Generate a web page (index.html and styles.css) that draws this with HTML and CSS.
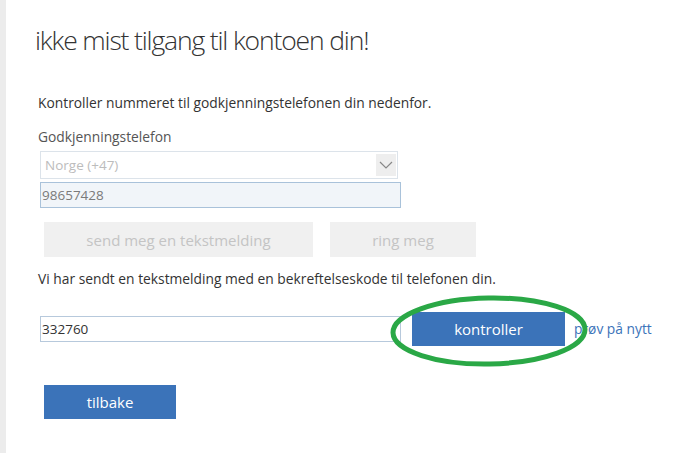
FILE: index.html
```html
<!DOCTYPE html>
<html lang="no">
<head>
<meta charset="utf-8">
<title>Bekreft telefon</title>
<link rel="stylesheet" href="styles.css">
</head>
<body>
<div class="page">
  <h1 class="title">ikke mist tilgang til kontoen din!</h1>
  <p class="intro">Kontroller nummeret til godkjenningstelefonen din nedenfor.</p>
  <div class="label">Godkjenningstelefon</div>
  <div class="select">
    <span class="select-text">Norge (+47)</span>
    <span class="select-arrow">
      <svg width="14" height="8" viewBox="0 0 14 8"><path d="M1 1 L7 7 L13 1" fill="none" stroke="#888" stroke-width="1.2"/></svg>
    </span>
  </div>
  <div class="phone">98657428</div>
  <div class="send-row">
    <div class="btn-disabled btn-sms">send meg en tekstmelding</div>
    <div class="btn-disabled btn-call">ring meg</div>
  </div>
  <p class="info">Vi har sendt en tekstmelding med en bekreftelseskode til telefonen din.</p>
  <div class="code-row">
    <div class="code">332760</div>
    <div class="verify-wrap">
      <div class="btn-primary btn-verify">kontroller</div>
      <svg class="ring" width="200" height="76" viewBox="0 0 200 76"><ellipse cx="100" cy="38" rx="96" ry="33" transform="rotate(-1 100 38)" fill="none" stroke="#2aa846" stroke-width="5"/></svg>
    </div>
    <a class="retry" href="#">prøv på nytt</a>
  </div>
  <div class="btn-primary btn-back">tilbake</div>
</div>
</body>
</html>
```
FILE: styles.css
```css
html, body {
  margin: 0;
  padding: 0;
  background: #fff;
}
body {
  font-family: "Open Sans", "Liberation Sans", sans-serif;
  color: #333;
}
.page {
  border-left: 6px solid #ececec;
  min-height: 453px;
  box-sizing: border-box;
  padding: 0 0 0 32px;
}
.title {
  margin: 0 0 0 -3px;
  padding-top: 22px;
  font-family: "Open Sans", sans-serif;
  font-weight: 300;
  font-size: 26.5px;
  letter-spacing: -1.15px;
  line-height: 36px;
  color: #333;
}
.intro {
  margin: 36px 0 0 0;
  font-size: 13.8px;
  line-height: 18px;
}
.label {
  margin-top: 16px;
  font-size: 13.8px;
  line-height: 18px;
  color: #555;
}
.select {
  margin: 5px 0 0 2px;
  width: 358px;
  height: 28px;
  box-sizing: border-box;
  border: 1px solid #dce3ea;
  display: flex;
  align-items: center;
  justify-content: space-between;
  padding: 0 1px 0 4px;
}
.select-text {
  font-size: 13.5px;
  color: #bcbcbc;
}
.select-arrow {
  width: 20px;
  height: 22px;
  background: #eeeeee;
  display: flex;
  align-items: center;
  justify-content: center;
}
.phone {
  margin: 3px 0 0 2px;
  width: 361px;
  height: 26px;
  box-sizing: border-box;
  border: 1px solid #a9c2da;
  background: #f1f5f9;
  font-size: 13.5px;
  color: #7a7a7a;
  line-height: 24px;
  padding-left: 1px;
}
.send-row {
  display: flex;
  gap: 17px;
  margin: 14px 0 0 6px;
}
.btn-disabled {
  height: 35px;
  background: #f0f0f0;
  color: #c4c4c4;
  font-size: 15px;
  display: flex;
  align-items: center;
  justify-content: center;
}
.btn-sms { width: 269px; }
.btn-call { width: 146px; }
.info {
  margin: 13px 0 0 0;
  font-size: 13.8px;
  line-height: 18px;
}
.code-row {
  display: flex;
  align-items: center;
  margin-top: 24px;
  margin-left: 2px;
}
.code {
  width: 361px;
  height: 26px;
  box-sizing: border-box;
  border: 1px solid #b7c9dc;
  font-size: 13.5px;
  line-height: 24px;
  padding-left: 1px;
  color: #333;
}
.verify-wrap {
  position: relative;
  margin-left: 11px;
}
.btn-primary {
  background: #3b73b9;
  color: #fff;
  font-size: 15px;
  display: flex;
  align-items: center;
  justify-content: center;
}
.btn-verify {
  width: 153px;
  height: 34px;
}
.ring {
  position: absolute;
  left: -23px;
  top: -19px;
  pointer-events: none;
}
.retry {
  margin-left: 9px;
  font-size: 13.8px;
  line-height: 18px;
  color: #3b73b9;
  text-decoration: none;
}
.btn-back {
  margin: 39px 0 0 6px;
  width: 132px;
  height: 34px;
}
```
